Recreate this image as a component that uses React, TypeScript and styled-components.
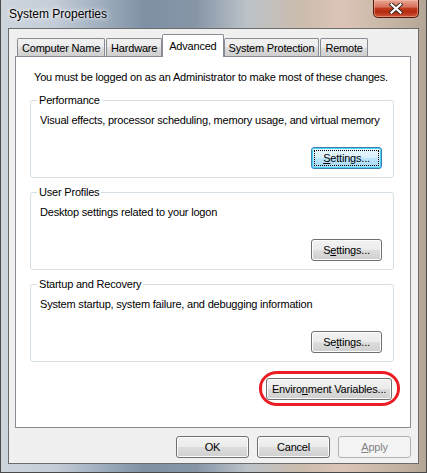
import React from "react";
import styled, { createGlobalStyle, css } from "styled-components";

const GlobalStyle = createGlobalStyle`
  html, body {
    margin: 0;
    padding: 0;
  }
  body {
    font-family: "Liberation Sans", Arial, sans-serif;
    font-size: 11px;
    letter-spacing: -0.2px;
    color: #000;
  }
`;

const Window = styled.div`
  width: 427px;
  height: 473px;
  box-sizing: border-box;
  display: flex;
  flex-direction: column;
  padding: 0 7px 8px;
  border: 1px solid #4b4b4b;
  border-top: none;
  background: linear-gradient(
    90deg,
    #cdd4dc 0%,
    #c5ced8 12%,
    #9eadbd 24%,
    #7f90a4 34%,
    #8796a7 46%,
    #bcc3c9 58%,
    #cbbcad 70%,
    #dcc4b8 80%,
    #c9b8a8 90%,
    #b4a696 100%
  );
`;

const TitleBar = styled.div`
  height: 28px;
  display: flex;
  align-items: flex-start;
`;

const Title = styled.div`
  margin: 7px 0 0 1px;
  font-size: 12px;
  letter-spacing: 0;
  line-height: 15px;
  text-shadow: 0 0 6px rgba(255, 255, 255, 0.95), 0 0 3px rgba(255, 255, 255, 0.9);
`;

const CloseButton = styled.div`
  margin-left: auto;
  width: 46px;
  height: 18px;
  box-sizing: border-box;
  border: 1px solid #4e1a0e;
  border-top: none;
  border-radius: 0 0 5px 5px;
  display: flex;
  align-items: center;
  justify-content: center;
  background: linear-gradient(
    180deg,
    #e7a595 0%,
    #d8735c 40%,
    #c03a1c 50%,
    #b32a10 70%,
    #d4563a 100%
  );
  box-shadow: inset 0 0 0 1px rgba(255, 200, 180, 0.45);
`;

const Client = styled.div`
  flex: 1;
  display: flex;
  flex-direction: column;
  background: #f0f0f0;
  border: 1px solid #6b6b6b;
  padding: 5px 7px 0 6px;
`;

const TabRow = styled.div`
  height: 22px;
  display: flex;
  align-items: flex-end;
  padding-left: 2px;
  position: relative;
  z-index: 1;
`;

const Tab = styled.div<{ $active?: boolean }>`
  box-sizing: border-box;
  height: 18px;
  padding: 0 4px;
  margin-right: 1px;
  line-height: 18px;
  border: 1px solid #898c95;
  border-bottom: none;
  border-radius: 2px 2px 0 0;
  background: linear-gradient(180deg, #f2f2f2 0%, #ebebeb 50%, #dddddd 50%, #cfcfcf 100%);
  white-space: nowrap;
  ${(p) =>
    p.$active &&
    css`
      height: 23px;
      margin: 0 0 -1px -1px;
      padding: 0 6px;
      line-height: 22px;
      background: #fff;
      position: relative;
      z-index: 2;
    `}
`;

const Panel = styled.div`
  height: 372px;
  box-sizing: border-box;
  border: 1px solid #898c95;
  background: #fff;
  padding: 12px 16px 0 14px;
  display: flex;
  flex-direction: column;
`;

const Intro = styled.div`
  line-height: 16px;
  margin-left: 4px;
  white-space: nowrap;
`;

const Group = styled.fieldset`
  margin: 7px 0 0;
  min-width: 0;
  border: 1px solid #d5dfe5;
  border-radius: 3px;
  padding: 4px 11px 8px 9px;
  &:first-of-type {
    margin-top: 8px;
  }
`;

const Legend = styled.legend`
  padding: 0 2px;
  margin-left: -3px;
  line-height: 15px;
`;

const Desc = styled.div`
  line-height: 16px;
  white-space: nowrap;
`;

const ButtonRow = styled.div`
  display: flex;
  justify-content: flex-end;
  margin-top: 19px;
`;

const Button = styled.button<{ $w: number; $default?: boolean }>`
  width: ${(p) => p.$w}px;
  height: 22px;
  box-sizing: border-box;
  padding: 0;
  font: inherit;
  letter-spacing: inherit;
  color: #000;
  white-space: nowrap;
  border: 1px solid #707070;
  border-radius: 3px;
  background: linear-gradient(180deg, #f2f2f2 0%, #ebebeb 50%, #dddddd 50%, #cfcfcf 100%);
  box-shadow: inset 0 0 0 1px #fcfcfc;
  position: relative;
  line-height: 19px;
  ${(p) =>
    p.$default &&
    css`
      border-color: #3c7fb1;
      background: linear-gradient(180deg, #eaf6fd 0%, #d9f0fc 50%, #bee6fd 50%, #a7d9f5 100%);
      box-shadow: inset 0 0 0 1px #48d3f4;
      &::after {
        content: "";
        position: absolute;
        inset: 2px;
        border: 1px dotted #000;
      }
    `}
  &:disabled {
    color: #838383;
    border-color: #adb2b5;
    background: #f4f4f4;
    box-shadow: none;
  }
`;

const EnvRow = styled.div`
  display: flex;
  justify-content: flex-end;
  margin-top: 16px;
  padding-right: 2px;
`;

const Marked = styled.div`
  position: relative;
  display: flex;
`;

const Ring = styled.div`
  position: absolute;
  inset: -7px -8px -6px -7px;
  border: 3px solid #ec1c24;
  border-radius: 18px / 17px;
  pointer-events: none;
`;

const Footer = styled.div`
  display: flex;
  justify-content: flex-end;
  gap: 8px;
  margin-top: 8px;
`;

const groups = [
  {
    title: "Performance",
    desc: "Visual effects, processor scheduling, memory usage, and virtual memory",
    label: (
      <>
        <u>S</u>ettings...
      </>
    ),
    isDefault: true,
  },
  {
    title: "User Profiles",
    desc: "Desktop settings related to your logon",
    label: (
      <>
        S<u>e</u>ttings...
      </>
    ),
  },
  {
    title: "Startup and Recovery",
    desc: "System startup, system failure, and debugging information",
    label: (
      <>
        Se<u>t</u>tings...
      </>
    ),
  },
];

const tabs = ["Computer Name", "Hardware", "Advanced", "System Protection", "Remote"];

const CloseIcon = () => (
  <svg width="14" height="11" viewBox="0 0 14 11">
    <path d="M2.5 1.5 L11.5 9.5 M11.5 1.5 L2.5 9.5" stroke="#3b2a26" strokeWidth="4.2" strokeLinecap="square" />
    <path d="M2.5 1.5 L11.5 9.5 M11.5 1.5 L2.5 9.5" stroke="#ffffff" strokeWidth="2.2" strokeLinecap="square" />
  </svg>
);

const App: React.FC = () => {
  return (
    <>
      <GlobalStyle />
      <Window>
        <TitleBar>
          <Title>System Properties</Title>
          <CloseButton>
            <CloseIcon />
          </CloseButton>
        </TitleBar>
        <Client>
          <TabRow>
            {tabs.map((t) => (
              <Tab key={t} $active={t === "Advanced"}>
                {t}
              </Tab>
            ))}
          </TabRow>
          <Panel>
            <Intro>You must be logged on as an Administrator to make most of these changes.</Intro>
            {groups.map((g) => (
              <Group key={g.title}>
                <Legend>{g.title}</Legend>
                <Desc>{g.desc}</Desc>
                <ButtonRow>
                  <Button $w={71} $default={g.isDefault}>
                    {g.label}
                  </Button>
                </ButtonRow>
              </Group>
            ))}
            <EnvRow>
              <Marked>
                <Button $w={126}>
                  Enviro<u>n</u>ment Variables...
                </Button>
                <Ring />
              </Marked>
            </EnvRow>
          </Panel>
          <Footer>
            <Button $w={73}>OK</Button>
            <Button $w={73}>Cancel</Button>
            <Button $w={73} disabled>
              <u>A</u>pply
            </Button>
          </Footer>
        </Client>
      </Window>
    </>
  );
};

export default App;
